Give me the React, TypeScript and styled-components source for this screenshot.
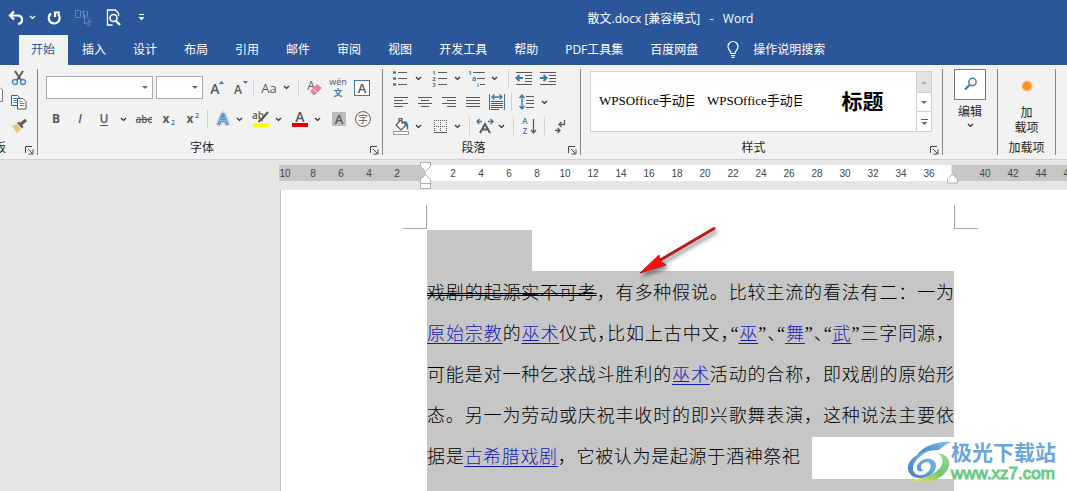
import React from 'react';
import styled, { createGlobalStyle } from 'styled-components';

const BLUE = '#2b579a';
const INK = '#595959';
const ACCENT = '#41789f';
const UI = `"Open Sans", "Noto Sans CJK SC", sans-serif`;

const GlobalStyle = createGlobalStyle`
  * { box-sizing: border-box; }
  body { margin: 0; background: #e6e6e6; overflow: hidden; }
  button { border: 0; background: none; padding: 0; margin: 0; font: inherit; color: inherit; cursor: pointer; }
  svg { display: block; flex: none; overflow: visible; }
`;

const Shell = styled.div`
  display: flex;
  flex-direction: column;
  height: 100vh;
  overflow: hidden;
  font-family: ${UI};
  font-size: 12px;
  color: #262626;
`;

/* ---------- title bar ---------- */
const TitleBar = styled.header`
  display: flex;
  align-items: center;
  height: 35px;
  flex: none;
  background: ${BLUE};
  color: #fff;
`;
const QuickAccess = styled.div`
  display: flex;
  align-items: center;
  width: 154px;
  padding-left: 6px;
`;
const QuickButton = styled.button<{ $w: number }>`
  display: flex;
  flex: none;
  justify-content: center;
  align-items: center;
  width: ${p => p.$w}px;
  height: 24px;
`;
const Title = styled.h1`
  flex: 1;
  margin: 0;
  padding-left: 120px;
  text-align: center;
  font-size: 12px;
  font-weight: 400;
  white-space: pre;
`;

/* ---------- tabs ---------- */
const TabBar = styled.nav`
  display: flex;
  align-items: stretch;
  gap: 2px;
  height: 30px;
  flex: none;
  padding-left: 19px;
  background: ${BLUE};
`;
const Tab = styled.button<{ $active?: boolean }>`
  padding: 0 13px 2px 12px;
  white-space: nowrap;
  background: ${p => (p.$active ? '#f2f2f2' : 'transparent')};
  color: ${p => (p.$active ? BLUE : '#fff')};
`;
const TellMe = styled.button`
  display: flex;
  align-items: center;
  gap: 14px;
  padding: 0 14px 2px;
  color: #fff;
  white-space: nowrap;
`;

/* ---------- ribbon ---------- */
const Ribbon = styled.section`
  display: flex;
  flex: none;
  height: 95px;
  padding: 4px 0;
  background: #f2f2f2;
  border-bottom: 1px solid #d0d0d0;
`;
const Group = styled.div<{ $w?: number }>`
  display: flex;
  flex-direction: column;
  justify-content: space-between;
  flex: ${p => (p.$w ? 'none' : '1')};
  width: ${p => (p.$w ? `${p.$w}px` : 'auto')};
  min-width: 0;
  border-right: 1px solid #868686;
`;
const RibbonEnd = styled.div`
  flex: none;
  width: 11px;
`;
const GroupFooter = styled.div`
  display: flex;
  align-items: flex-end;
  height: 15px;
`;
const GroupLabel = styled.span<{ $cut?: boolean }>`
  display: flex;
  flex: 1;
  min-width: 0;
  justify-content: ${p => (p.$cut ? 'flex-end' : 'center')};
  padding-right: ${p => (p.$cut ? 15 : 0)}px;
  line-height: 14px;
  white-space: nowrap;
`;
const Launcher = styled.button`
  width: 16px;
  height: 14px;
  display: flex;
  align-items: flex-end;
  justify-content: center;
`;
const ClipBody = styled.div`
  display: flex;
`;
const PasteEdge = styled.div`
  width: 8px;
  padding-top: 17px;
`;
const ClipTools = styled.div`
  display: flex;
  flex-direction: column;
  gap: 6px;
`;
const FontBody = styled.div`
  display: flex;
  flex-direction: column;
  gap: 9px;
  padding: 7px 0 0 7px;
`;
const ParaBody = styled.div`
  display: flex;
  flex-direction: column;
  gap: 6px;
  padding-left: 6px;
`;
const Row = styled.div`
  display: flex;
  align-items: center;
`;
const Tool = styled.button<{ $w?: number; $h?: number; $gap?: number }>`
  display: flex;
  align-items: center;
  justify-content: center;
  width: ${p => p.$w ?? 24}px;
  height: ${p => p.$h ?? 22}px;
  margin-right: ${p => p.$gap ?? 0}px;
  flex: none;
  color: ${INK};
`;
const Divider = styled.span<{ $l?: number; $r?: number }>`
  width: 1px;
  height: 18px;
  margin: 0 ${p => p.$r ?? 3}px 0 ${p => p.$l ?? 3}px;
  background: #d2d2d2;
`;
const Combo = styled.div<{ $w: number }>`
  display: flex;
  align-items: center;
  width: ${p => p.$w}px;
  height: 23px;
  margin: 0 2px 0 1px;
  padding-right: 4px;
  background: #fff;
  border: 1px solid #ababab;
`;
const ComboSelect = styled.select`
  flex: 1;
  min-width: 0;
  height: 20px;
  border: 0;
  appearance: none;
  background: transparent;
  font: inherit;
`;

/* ---------- styles gallery ---------- */
const Gallery = styled.div`
  display: flex;
  height: 61px;
  margin: 2px 10px 0 9px;
  background: #fff;
  border: 1px solid #cfcfcf;
`;
const GalleryItems = styled.div`
  display: flex;
  flex: 1;
  min-width: 0;
  overflow: hidden;
`;
const StyleItem = styled.button<{ $heading?: boolean }>`
  flex: none;
  width: 108px;
  padding: 0 5px 4px 8px;
  text-align: ${p => (p.$heading ? 'center' : 'left')};
  font-family: "Liberation Serif", "Noto Sans CJK SC", serif;
  font-size: ${p => (p.$heading ? 21 : 13)}px;
  font-weight: ${p => (p.$heading ? 700 : 400)};
  color: #000;
`;
const StyleName = styled.span`
  display: block;
  overflow: hidden;
  white-space: nowrap;
`;
const GalleryScroll = styled.div`
  display: grid;
  grid-template-rows: 21px 19px 1fr;
  width: 15px;
  border-left: 1px solid #cfcfcf;
`;
const ScrollButton = styled.button<{ $off?: boolean }>`
  display: flex;
  align-items: center;
  justify-content: center;
  background: ${p => (p.$off ? '#e3e3e3' : '#fff')};
  border-bottom: 1px solid #cfcfcf;
  &:last-child { border-bottom: 0; }
`;

/* ---------- editing and add-ins ---------- */
const BigButton = styled.button`
  display: flex;
  flex-direction: column;
  align-items: center;
  line-height: 15px;
`;
const IconFrame = styled.span`
  display: flex;
  align-items: center;
  justify-content: center;
  width: 32px;
  height: 31px;
  margin-bottom: 4px;
  background: #fff;
  border: 1px solid #7a7a7a;
`;
const ChevronSlot = styled.span`
  padding-top: 4px;
`;
const DotSlot = styled.span`
  padding: 11px 0 13px;
`;

/* ---------- ruler ---------- */
const Workspace = styled.main`
  display: flex;
  flex-direction: column;
  flex: 1;
  min-height: 0;
  padding: 5px 0 0 279px;
`;
const Ruler = styled.div`
  position: relative;
  display: flex;
  flex: none;
  height: 16px;
  margin-bottom: 9px;
  font-family: "Liberation Sans", sans-serif;
  font-size: 10px;
  line-height: 17px;
  color: #444;
`;
const Margin = styled.div<{ $side: 'left' | 'right' }>`
  display: flex;
  overflow: hidden;
  justify-content: ${p => (p.$side === 'left' ? 'flex-end' : 'flex-start')};
  flex: ${p => (p.$side === 'left' ? 'none' : '1')};
  width: ${p => (p.$side === 'left' ? '147px' : 'auto')};
  padding: ${p => (p.$side === 'left' ? '0 15px 0 0' : '0 0 0 19px')};
  background: #c6c6c6;
`;
const Measure = styled.div`
  display: flex;
  flex: none;
  width: 525px;
  margin-right: 1px;
  padding-left: 13px;
  background: #fff;
`;
const Tick = styled.span`
  flex: none;
  width: 28px;
  text-align: center;
`;
const Marker = styled.div<{ $x: number; $y: number }>`
  position: absolute;
  left: ${p => p.$x}px;
  top: ${p => p.$y}px;
`;

/* ---------- page ---------- */
const Page = styled.article`
  position: relative;
  flex: 1;
  min-height: 0;
  margin-left: 1px;
  padding: 15px 0 0 122px;
  background: #fff;
  border-left: 1px solid #c4c4c4;
  overflow: hidden;
`;
const CropMarks = styled.div`
  display: flex;
  justify-content: space-between;
  width: 575px;
  height: 24px;
  margin-bottom: 1px;
`;
const Corner = styled.span<{ $side: 'left' | 'right' }>`
  width: 24px;
  border-bottom: 1px solid #a6a6a6;
  border-${p => (p.$side === 'left' ? 'right' : 'left')}: 1px solid #a6a6a6;
`;
const TextColumn = styled.div`
  width: 527px;
  margin-left: 24px;
  font-family: "Liberation Serif", "Noto Sans CJK SC", serif;
  font-size: 18px;
  font-weight: 300;
  line-height: 41px;
  color: #000;
`;
const EmptyLine = styled.div`
  width: 105px;
  height: 41px;
  background: #c6c6c6;
`;
const Paragraph = styled.div`
  padding-top: 2px;
  background: #c6c6c6;
`;
const Line = styled.p`
  margin: 0;
  height: 41px;
  white-space: nowrap;
  text-align: justify;
  text-align-last: justify;
`;
const LastRow = styled.div`
  display: flex;
  height: 42px;
  background: #fff;
`;
const LastLine = styled(Line)`
  width: 385px;
  height: 42px;
  padding-right: 12px;
  background: #c6c6c6;
`;
const TailSelection = styled.div`
  height: 60px;
  background: #c6c6c6;
`;
const Struck = styled.s`
  text-decoration: line-through double #000 1px;
`;
const Link = styled.a`
  color: #1a1ab8;
  text-decoration: underline 1px;
  text-underline-offset: 3px;
`;
const Half = styled.span`
  font-feature-settings: "halt";
`;
const Arrow = styled.div`
  position: absolute;
  left: 351px;
  top: 30px;
`;
const Watermark = styled.div`
  position: absolute;
  left: 626px;
  top: 248px;
  display: flex;
`;
const WatermarkText = styled.div`
  display: flex;
  flex-direction: column;
  font-weight: 700;
`;
const SiteName = styled.span`
  font-family: "Noto Sans CJK SC", sans-serif;
  font-size: 21px;
  line-height: 26px;
  color: #6aa6da;
`;
const SiteUrl = styled.span`
  font-family: "Liberation Sans", sans-serif;
  font-size: 17px;
  line-height: 20px;
  font-weight: 400;
  color: #6cca88;
  -webkit-text-stroke: 1px #6cca88;
`;

/* ---------- drawings ---------- */
const Chevron = ({ color = '#333' }: { color?: string }) => (
  <svg width="7" height="5" viewBox="0 0 7 5" fill="none" stroke={color} strokeWidth="1.3">
    <path d="M1 1l2.5 2.4L6 1" />
  </svg>
);
const Triangle = ({ up, color = '#666' }: { up?: boolean; color?: string }) => (
  <svg width="6" height="3" viewBox="0 0 6 3" fill={color}>
    <path d={up ? 'M0 3h6L3 0z' : 'M0 0h6L3 3z'} />
  </svg>
);
const Pull = ({ label, w = 12, gap = 0 }: { label: string; w?: number; gap?: number }) => (
  <Tool $w={w} $h={18} $gap={gap} aria-label={label}><Chevron /></Tool>
);
type IconProps = { w?: number; h?: number; children: React.ReactNode };
const Icon = ({ w = 20, h = 18, children }: IconProps) => (
  <svg width={w} height={h} viewBox={`0 0 ${w} ${h}`} fill="none" stroke={INK} strokeWidth="1">
    {children}
  </svg>
);
const Glyph = ({ x, y, size, fill = INK, weight = 400, children, ...rest }: any) => (
  <text x={x} y={y} fontSize={size} fill={fill} fontWeight={weight} stroke="none" textAnchor="middle" {...rest}>{children}</text>
);
const LauncherIcon = () => (
  <Icon w={9} h={9}>
    <path d="M.5 7V.5H7M3 3l4 4M8 3.5V8H3.5" stroke="#444" />
  </Icon>
);

const LINE_SETS: Record<string, [number, number][]> = {
  left: [[3, 17], [3, 12], [3, 17], [3, 12]],
  center: [[3, 17], [6, 14], [3, 17], [6, 14]],
  right: [[3, 17], [8, 17], [3, 17], [8, 17]],
  justify: [[3, 17], [3, 17], [3, 17], [3, 17]],
};
const AlignIcon = ({ kind }: { kind: string }) => (
  <Icon>
    {LINE_SETS[kind].map(([a, b], i) => <path key={i} d={`M${a} ${4.5 + i * 3}H${b}`} />)}
  </Icon>
);
const IndentIcon = ({ inward }: { inward?: boolean }) => (
  <Icon>
    <path d="M2 3.500h16M11 6.500h7M11 9.500h7M11 12.500h7M2 15.500h16" />
    <path stroke={ACCENT} strokeWidth="2" d={inward ? 'M2 9h6M5.500 6l3 3-3 3' : 'M3 9h6M5.500 6l-3 3 3 3'} />
  </Icon>
);
const TABS = ['开始', '插入', '设计', '布局', '引用', '邮件', '审阅', '视图', '开发工具', '帮助', 'PDF工具集', '百度网盘'];
const evens = (from: number, to: number) =>
  Array.from({ length: Math.abs(to - from) / 2 + 1 }, (_, i) => from + (to > from ? 2 : -2) * i);

function Footer({ label, cut }: { label: string; cut?: boolean }) {
  return (
    <GroupFooter>
      <GroupLabel $cut={cut}>{label}</GroupLabel>
      <Launcher aria-label={`${label}设置`}><LauncherIcon /></Launcher>
    </GroupFooter>
  );
}

function ClipboardGroup() {
  return (
    <Group $w={38}>
      <ClipBody>
        <PasteEdge>
          <Icon w={4} h={17}><path d="M0 1.500L2.500 4v11.500H0" fill="#fff" stroke="#777" /></Icon>
        </PasteEdge>
        <ClipTools>
          <Tool $w={22} $h={18} aria-label="剪切">
            <Icon w={16} h={16}>
              <path d="M4 1l6 9M12 1L6 10" strokeWidth="2" />
              <circle cx="4" cy="12" r="2.500" stroke="#4a86bd" strokeWidth="1.400" />
              <circle cx="12" cy="12" r="2.500" stroke="#4a86bd" strokeWidth="1.400" />
            </Icon>
          </Tool>
          <Tool $w={22} $h={18} aria-label="复制">
            <Icon w={16} h={16}>
              <path d="M.5 1.500h6l2 2v8h-8z" fill="#fff" />
              <path d="M2 4.500h4M2 6.500h4M2 8.500h4" stroke="#4a86bd" />
              <path d="M6.500 4.500h5.500l3 3v7.500H6.500z" fill="#fff" />
              <path d="M8.500 7.500h3M8.500 9.500h5M8.500 11.500h5" stroke="#4a86bd" />
            </Icon>
          </Tool>
          <Tool $w={22} $h={18} aria-label="格式刷">
            <Icon w={16} h={16}>
              <path d="M1 8l5-2 4 5-4 4.500c-1-2-3-4-5-7.500z" fill="#eac282" stroke="none" />
              <path d="M6 5l2-1.500 4.500 5L11 10.500z" fill={INK} stroke="none" />
              <path d="M10 6l5-4" strokeWidth="3" />
            </Icon>
          </Tool>
        </ClipTools>
      </ClipBody>
      <Footer label="板" cut />
    </Group>
  );
}

function FontGroup() {
  return (
    <Group $w={345}>
      <FontBody>
        <Row>
          <Combo $w={107}><ComboSelect aria-label="字体" /><Triangle /></Combo>
          <Combo $w={47}><ComboSelect aria-label="字号" /><Triangle /></Combo>
          <Tool aria-label="增大字号">
            <Icon><Glyph x={8} y={15} size={14} weight={600}>A</Glyph><path d="M12 5l2.500-3L17 5z" fill={ACCENT} stroke="none" /></Icon>
          </Tool>
          <Tool aria-label="减小字号">
            <Icon><Glyph x={7} y={15} size={12} weight={600}>A</Glyph><path d="M12 2h5l-2.500 3z" fill={ACCENT} stroke="none" /></Icon>
          </Tool>
          <Divider $l={0} $r={5} />
          <Tool $w={21} aria-label="更改大小写"><Icon w={21}><Glyph x={10} y={14} size={13}>Aa</Glyph></Icon></Tool>
          <Pull label="大小写选项" />
          <Divider $l={6} />
          <Tool aria-label="清除格式">
            <Icon>
              <Glyph x={7} y={11} size={12}>A</Glyph>
              <path d="M6 12l7-7 5 4-7 7H9z" fill="#e8849a" stroke="none" />
              <path d="M8.500 9.500l5 4.500" stroke="#f6d0d8" />
            </Icon>
          </Tool>
          <Tool aria-label="拼音指南">
            <Icon><Glyph x={10} y={6} size={9}>wén</Glyph><Glyph x={10} y={17} size={9} fill={ACCENT} weight={700}>文</Glyph></Icon>
          </Tool>
          <Tool $w={24} aria-label="字符边框">
            <Icon w={16} h={16}><rect x=".5" y=".5" width="15" height="15" fill="#fff" stroke={ACCENT} /><Glyph x={8} y={13} size={13} weight={600}>A</Glyph></Icon>
          </Tool>
        </Row>
        <Row>
          <Tool aria-label="加粗"><Icon><Glyph x={9} y={13} size={12} weight={700}>B</Glyph></Icon></Tool>
          <Tool aria-label="倾斜"><Icon><Glyph x={9} y={13} size={12} weight={600} fontStyle="italic">I</Glyph></Icon></Tool>
          <Tool aria-label="下划线"><Icon><Glyph x={9} y={13} size={12} weight={600}>U</Glyph><path d="M5 15.500h8" /></Icon></Tool>
          <Pull label="下划线选项" gap={3} />
          <Tool aria-label="删除线"><Icon><Glyph x={10} y={13} size={10} weight={600}>abc</Glyph><path d="M2 9.500h16" /></Icon></Tool>
          <Tool aria-label="下标"><Icon><Glyph x={8} y={13} size={12} weight={700}>x</Glyph><Glyph x={15} y={15} size={7} fill={ACCENT} weight={600}>2</Glyph></Icon></Tool>
          <Tool aria-label="上标"><Icon><Glyph x={8} y={13} size={12} weight={700}>x</Glyph><Glyph x={15} y={8} size={7} fill={ACCENT} weight={600}>2</Glyph></Icon></Tool>
          <Divider />
          <Tool aria-label="文本效果">
            <Icon>
              <text x="10" y="14" fontSize="15" fontWeight="600" textAnchor="middle" fill="#fff" stroke="#c2dbf2" strokeWidth="4">A</text>
              <text x="10" y="14" fontSize="15" fontWeight="600" textAnchor="middle" fill="#fff" stroke="#477db4" strokeWidth="1">A</text>
            </Icon>
          </Tool>
          <Pull label="文本效果选项" w={9} gap={5} />
          <Tool aria-label="突出显示">
            <Icon>
              <Glyph x={7} y={9} size={10} weight={600}>ab</Glyph>
              <path d="M17 2l-6 7" strokeWidth="2" /><path d="M7 12l3-4 2 2z" fill={INK} />
              <path d="M2 15h16" stroke="#ffff00" strokeWidth="4" />
            </Icon>
          </Tool>
          <Pull label="突出显示颜色" w={10} gap={5} />
          <Tool aria-label="字体颜色">
            <Icon><Glyph x={10} y={12} size={14} weight={600}>A</Glyph><path d="M2 15h16" stroke="#e60000" strokeWidth="4" /></Icon>
          </Tool>
          <Pull label="字体颜色选项" w={10} gap={5} />
          <Tool aria-label="字符底纹">
            <Icon w={14} h={14}><rect width="14" height="14" fill="#bdbdbd" stroke="none" /><Glyph x={7} y={12} size={13} weight={600}>A</Glyph></Icon>
          </Tool>
          <Tool aria-label="带圈字符">
            <Icon w={16} h={16}><circle cx="8" cy="8" r="7.400" fill="#fff" /><Glyph x={8} y={12} size={10}>字</Glyph></Icon>
          </Tool>
        </Row>
      </FontBody>
      <Footer label="字体" />
    </Group>
  );
}

function ParagraphGroup() {
  return (
    <Group $w={198}>
      <ParaBody>
        <Row>
          <Tool $h={18} aria-label="项目符号">
            <Icon><path d="M7 3.500h9M7 9.500h9M7 15.500h9" /><path d="M2 3.500h3M2 9.500h3M2 15.500h3" stroke={ACCENT} strokeWidth="2.600" /></Icon>
          </Tool>
          <Pull label="项目符号选项" w={11} gap={4} />
          <Tool $h={18} aria-label="编号">
            <Icon>
              <path d="M8 3.500h9M8 9.500h9M8 15.500h9" />
              {[1, 2, 3].map(n => <Glyph key={n} x={4} y={n * 6} size={6} weight={700} fill={ACCENT}>{n}</Glyph>)}
            </Icon>
          </Tool>
          <Pull label="编号选项" w={11} gap={2} />
          <Tool $w={24} $h={18} aria-label="多级列表">
            <Icon>
              <path d="M6 3.500h12M10 9.500h8M13 15.500h5" />
              <Glyph x={3} y={6} size={6} weight={700} fill={ACCENT}>1</Glyph>
              <Glyph x={7} y={12} size={7} weight={700} fill={ACCENT}>a</Glyph>
              <Glyph x={11} y={18} size={6} weight={700} fill={ACCENT}>i</Glyph>
            </Icon>
          </Tool>
          <Pull label="多级列表选项" w={10} gap={3} />
          <Divider $l={6} />
          <Tool $h={18} aria-label="减少缩进"><IndentIcon /></Tool>
          <Tool $h={18} aria-label="增加缩进"><IndentIcon inward /></Tool>
        </Row>
        <Row>
          <Tool $h={18} aria-label="左对齐"><AlignIcon kind="left" /></Tool>
          <Tool $h={18} aria-label="居中"><AlignIcon kind="center" /></Tool>
          <Tool $h={18} aria-label="右对齐"><AlignIcon kind="right" /></Tool>
          <Tool $h={18} aria-label="两端对齐"><AlignIcon kind="justify" /></Tool>
          <Tool $h={18} aria-label="分散对齐">
            <Icon>
              <path d="M2.500 1v16M17.500 1v16" stroke={ACCENT} />
              <path d="M5 4h10M7.500 1.500L5 4l2.500 2.500M12.500 1.500L15 4l-2.500 2.500" stroke={ACCENT} strokeWidth="1.400" />
              <path d="M4 8.500h12M4 10.500h12M4 12.500h12M4 14.500h12M4 16.500h8" />
            </Icon>
          </Tool>
          <Divider $l={2} />
          <Tool $h={18} aria-label="行距">
            <Icon><path d="M9 3.500h8M9 7.500h8M9 10.500h8M9 14.500h8" /><path d="M5 2v14M2.500 5L5 2l2.500 3M2.500 13L5 16l2.500-3" stroke={ACCENT} strokeWidth="1.400" /></Icon>
          </Tool>
          <Pull label="行距选项" w={10} />
        </Row>
        <Row>
          <Tool $h={18} aria-label="底纹">
            <Icon>
              <path d="M5 8l5-5 5 5-5 5zM8 5V1.500h3V7" fill="#fff" strokeWidth="1.200" />
              <path d="M13 4c4 0 5 4 4 9-2-1-1-5-4-6z" fill={ACCENT} stroke="none" />
              <rect x="2.500" y="14.500" width="15" height="3" fill="#fff" stroke="#999" />
            </Icon>
          </Tool>
          <Pull label="底纹选项" w={11} gap={4} />
          <Tool $h={18} aria-label="边框">
            <Icon><path d="M4.500 3v12M10.500 3v12M16.500 3v12M4 3.500h13M4 9.500h13" strokeDasharray="1 1" /><path d="M4 15.500h13" /></Icon>
          </Tool>
          <Pull label="边框选项" w={11} />
          <Divider $l={6} />
          <Tool $h={18} aria-label="中文版式">
            <Icon>
              <path d="M5 16l5-9 5 9M7 12.500h6" strokeWidth="2" />
              <path d="M2 4.500h5M4.500 2L2 4.500 4.500 7M18 4.500h-5M15.500 2L18 4.500 15.500 7" stroke={ACCENT} strokeWidth="1.400" />
            </Icon>
          </Tool>
          <Pull label="中文版式选项" w={9} />
          <Divider $l={7} />
          <Tool $h={18} aria-label="排序">
            <Icon>
              <Glyph x={6} y={7} size={8} weight={600} fill={ACCENT}>A</Glyph>
              <Glyph x={6} y={17} size={8} weight={600} fill="#8f5ba8">Z</Glyph>
              <path d="M14.500 2v14M12 13l2.500 3 2.500-3" strokeWidth="1.300" />
            </Icon>
          </Tool>
          <Divider />
          <Tool $h={18} aria-label="显示编辑标记">
            <Icon><path d="M14.500 3v4.500H9M11.500 5L9 7.500 11.500 10M5 13.500h5M7.500 11l2.500 2.500L7.500 16" strokeWidth="1.300" /></Icon>
          </Tool>
        </Row>
      </ParaBody>
      <Footer label="段落" />
    </Group>
  );
}

function StylesGroup() {
  return (
    <Group>
      <Gallery>
        <GalleryItems>
          <StyleItem><StyleName>WPSOffice手动目</StyleName></StyleItem>
          <StyleItem><StyleName>WPSOffice手动目</StyleName></StyleItem>
          <StyleItem $heading><StyleName>标题</StyleName></StyleItem>
        </GalleryItems>
        <GalleryScroll>
          <ScrollButton $off aria-label="上一行"><Triangle up color="#b5b5b5" /></ScrollButton>
          <ScrollButton aria-label="下一行"><Triangle /></ScrollButton>
          <ScrollButton aria-label="更多样式">
            <Icon w={7} h={6}><path d="M0 .5h7" /><path d="M0.500 3h6l-3 3z" fill="#666" stroke="none" /></Icon>
          </ScrollButton>
        </GalleryScroll>
      </Gallery>
      <Footer label="样式" />
    </Group>
  );
}

function RulerBar() {
  return (
    <Ruler>
      <Margin $side="left">{evens(10, 2).map(n => <Tick key={n}>{n}</Tick>)}</Margin>
      <Measure>{evens(2, 36).map(n => <Tick key={n}>{n}</Tick>)}</Measure>
      <Margin $side="right">{evens(40, 46).map(n => <Tick key={n}>{n}</Tick>)}</Margin>
      <Marker $x={141} $y={-3}>
        <svg width="11" height="28" viewBox="0 0 11 28" fill="#fff" stroke="#b0b0b0">
          <path d="M.5.5h10v4l-5 5-5-5zM5.500 12.500l5 5v4H.5v-4zM.5 21.500h10v5H.5z" />
        </svg>
      </Marker>
      <Marker $x={668} $y={9}>
        <svg width="11" height="10" viewBox="0 0 11 10" fill="#fff" stroke="#b0b0b0">
          <path d="M5.500.5l5 4.500v4H.5V5z" />
        </svg>
      </Marker>
    </Ruler>
  );
}

function DocumentPage() {
  return (
    <Page>
      <CropMarks><Corner $side="left" /><Corner $side="right" /></CropMarks>
      <TextColumn lang="zh-CN">
        <EmptyLine />
        <Paragraph>
          <Line><Struck>戏剧的起源实不可考</Struck>，有多种假说。比较主流的看法有二：一为</Line>
          <Line>
            <Link href="#yszj">原始宗教</Link>的<Link href="#ws">巫术</Link>仪式<Half>，</Half>比如上古中文<Half>，</Half>“<Link href="#wu">巫</Link>”<Half>、</Half>“<Link href="#wu2">舞</Link>”<Half>、</Half>“<Link href="#wu3">武</Link>”三字同源，
          </Line>
          <Line>可能是对一种乞求战斗胜利的<Link href="#ws">巫术</Link>活动的合称，即戏剧的原始形</Line>
          <Line>态。另一为劳动或庆祝丰收时的即兴歌舞表演，这种说法主要依</Line>
        </Paragraph>
        <LastRow>
          <LastLine>据是<Link href="#gxl">古希腊戏剧</Link>，它被认为是起源于酒神祭祀</LastLine>
        </LastRow>
        <TailSelection />
      </TextColumn>
      <Arrow>
        <svg width="90" height="60" viewBox="0 0 90 60">
          <defs>
            <filter id="drop" x="-20%" y="-20%" width="150%" height="150%">
              <feDropShadow dx="2" dy="3" stdDeviation="2" floodColor="#000" floodOpacity=".5" />
            </filter>
          </defs>
          <g filter="url(#drop)">
            <path d="M82 8.500L25 42" stroke="#b81c1c" strokeWidth="3" strokeLinecap="round" />
            <path d="M8 53l19-18 1 6 6 4z" fill="#f80d0d" stroke="#b81c1c" strokeWidth="1" />
          </g>
        </svg>
      </Arrow>
      <Watermark>
        <svg width="44" height="46" viewBox="0 -3 44 46">
          <defs>
            <linearGradient id="sky" x1="0" y1="1" x2="1" y2="0">
              <stop offset="0" stopColor="#3f7fc8" /><stop offset="1" stopColor="#7cc0ea" />
            </linearGradient>
            <linearGradient id="leaf" x1="0" y1="1" x2="1" y2="0">
              <stop offset="0" stopColor="#f2e05a" /><stop offset=".5" stopColor="#74c86a" /><stop offset="1" stopColor="#9ad89a" />
            </linearGradient>
          </defs>
          <path d="M44 1C30 0 17 5 10 14 18 10 26 9 32 9c3-3 7-6 12-8z" fill="url(#sky)" />
          <path d="M22 10C9 12 0 20 1 28c1 7 8 10 15 9 8-1 13-7 13-12 0-6-5-8-10-7-6 1-10 6-9 10 1 3 5 3 7 1-5 0-4-7 2-8 4 0 6 3 4 7-2 4-7 7-11 6-6-1-8-7-4-13 3-5 8-8 14-11z" fill="url(#sky)" />
          <path d="M31 12c6 4 6 12 0 17-6 6-14 8-26 10 8 3 22 2 30-4 10-8 11-20-4-23z" fill="url(#leaf)" />
        </svg>
        <WatermarkText>
          <SiteName>极光下载站</SiteName>
          <SiteUrl>www.xz7.com</SiteUrl>
        </WatermarkText>
      </Watermark>
    </Page>
  );
}

export default function App() {
  return (
    <Shell>
      <GlobalStyle />
      <TitleBar>
        <QuickAccess>
          <QuickButton $w={20} aria-label="撤消">
            <svg width="16" height="16" viewBox="0 0 16 16" fill="none" stroke="#fff" strokeWidth="2.200">
              <path d="M6 1.500L2 5.500l4 4M2 5.500h7.500c6 0 6 8 .5 8.500" />
            </svg>
          </QuickButton>
          <QuickButton $w={13} aria-label="撤消选项"><Chevron color="#fff" /></QuickButton>
          <QuickButton $w={30} aria-label="重复">
            <svg width="16" height="16" viewBox="0 0 16 16" fill="none" stroke="#fff" strokeWidth="2.200">
              <path d="M5 3.500a5.500 5.500 0 1 0 7 .5M8 2.500h6M9 2v5" />
            </svg>
          </QuickButton>
          <QuickButton $w={29} aria-label="选择对象" disabled>
            <svg width="17" height="18" viewBox="0 0 17 18" fill="none" stroke="#6685b8">
              <path d="M.5 1.500h5v7h-5zM7 2.500h3M8.500 2v7M12.500 7V2.500H11" />
              <path d="M9.500 6v9l2-2 2 4 1.500-1-2-3.500h3z" />
            </svg>
          </QuickButton>
          <QuickButton $w={31} aria-label="打印预览">
            <svg width="15" height="17" viewBox="0 0 15 17" fill="none" stroke="#fff">
              <path d="M12.500 7V4.500l-3-3.500H1.500v15h5" strokeWidth="1.300" />
              <circle cx="7.500" cy="9" r="3.500" strokeWidth="1.600" />
              <path d="M10 12l4 4" strokeWidth="2.400" />
            </svg>
          </QuickButton>
          <QuickButton $w={25} aria-label="自定义快速访问工具栏">
            <svg width="7" height="7" viewBox="0 0 7 7" fill="#fff"><path d="M1 0h5v1H1zM.5 3h6l-3 3.500z" /></svg>
          </QuickButton>
        </QuickAccess>
        <Title>{'散文.docx [兼容模式]   -   Word'}</Title>
      </TitleBar>
      <TabBar>
        {TABS.map((t, i) => <Tab key={t} $active={i === 0}>{t}</Tab>)}
        <TellMe>
          <svg width="12" height="17" viewBox="0 0 12 17" fill="none" stroke="#fff" strokeWidth="1.200">
            <path d="M4 12.500C4 9.500 1 9 1 5.500a5 5 0 0 1 10 0C11 9 8 9.500 8 12.500zM4 14.500h4M4.500 16.300h3" />
          </svg>
          操作说明搜索
        </TellMe>
      </TabBar>
      <Ribbon>
        <ClipboardGroup />
        <FontGroup />
        <ParagraphGroup />
        <StylesGroup />
        <Group $w={55}>
          <BigButton>
            <IconFrame>
              <svg width="15" height="15" viewBox="0 0 15 15" fill="none" stroke={ACCENT}>
                <circle cx="9.500" cy="5" r="3.700" strokeWidth="1.400" /><path d="M6.500 8L2 12.500" strokeWidth="2.200" />
              </svg>
            </IconFrame>
            编辑
            <ChevronSlot><Chevron /></ChevronSlot>
          </BigButton>
        </Group>
        <Group $w={58}>
          <BigButton>
            <DotSlot>
              <svg width="12" height="12" viewBox="0 0 12 12">
                <circle cx="6" cy="6" r="5.500" fill="#f9c27a" /><circle cx="6" cy="6" r="4.300" fill="#f7931e" />
              </svg>
            </DotSlot>
            <span>加<br />载项</span>
          </BigButton>
          <GroupFooter><GroupLabel>加载项</GroupLabel></GroupFooter>
        </Group>
        <RibbonEnd />
      </Ribbon>
      <Workspace>
        <RulerBar />
        <DocumentPage />
      </Workspace>
    </Shell>
  );
}
